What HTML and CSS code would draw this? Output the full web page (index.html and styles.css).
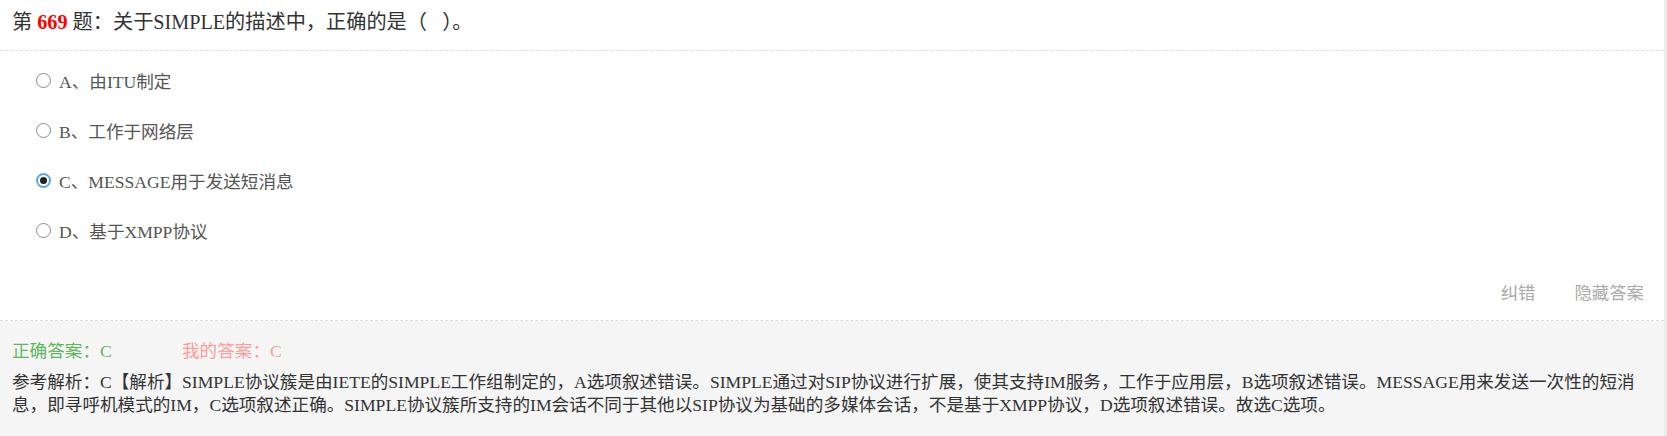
FILE: index.html
```html
<!DOCTYPE html>
<html lang="zh-CN">
<head>
<meta charset="utf-8">
<title>第669题</title>
<link rel="stylesheet" href="styles.css">
</head>
<body>
<div class="page">
  <div class="question">
    <div class="title">第 <b class="num">669</b> 题：关于SIMPLE的描述中，正确的是（&nbsp;&nbsp;&nbsp;）。</div>
    <ul class="options">
      <li class="option"><input type="radio" name="q669" class="radio"><span class="label">A、由ITU制定</span></li>
      <li class="option"><input type="radio" name="q669" class="radio"><span class="label">B、工作于网络层</span></li>
      <li class="option"><input type="radio" name="q669" class="radio" checked><span class="label">C、MESSAGE用于发送短消息</span></li>
      <li class="option"><input type="radio" name="q669" class="radio"><span class="label">D、基于XMPP协议</span></li>
    </ul>
    <div class="actions">
      <a class="action">纠错</a>
      <a class="action">隐藏答案</a>
    </div>
  </div>
  <div class="answer">
    <div class="answer-row">
      <span class="correct">正确答案：C</span>
      <span class="mine">我的答案：C</span>
    </div>
    <div class="analysis">参考解析：C【解析】SIMPLE协议簇是由IETE的SIMPLE工作组制定的，A选项叙述错误。SIMPLE通过对SIP协议进行扩展，使其支持IM服务，工作于应用层，B选项叙述错误。MESSAGE用来发送一次性的短消息，即寻呼机模式的IM，C选项叙述正确。SIMPLE协议簇所支持的IM会话不同于其他以SIP协议为基础的多媒体会话，不是基于XMPP协议，D选项叙述错误。故选C选项。</div>
  </div>
</div>
</body>
</html>
```

FILE: styles.css
```css
html, body {
  margin: 0;
  padding: 0;
}

body {
  background: #ececec;
  font-family: "Liberation Serif", "Noto Sans CJK SC", serif;
  color: #333;
}

.page {
  margin-right: 3px;
  background: #fff;
  min-height: 436px;
  display: flex;
  flex-direction: column;
}

.question {
  background: #fff;
}

.title {
  font-size: 20.2px;
  line-height: 28px;
  padding: 8px 12px 14px;
  border-bottom: 1px dashed #ddd;
  color: #333;
}

.num {
  color: #f00;
  font-weight: bold;
}

.options {
  list-style: none;
  margin: 0;
  padding: 4px 0 0 36px;
}

.option {
  display: flex;
  align-items: center;
  height: 50px;
  font-size: 17.6px;
  color: #555;
}

.radio {
  appearance: none;
  -webkit-appearance: none;
  width: 15px;
  height: 15px;
  margin: 0 8px 0 0;
  border: 1px solid #8a8a8a;
  border-radius: 50%;
  background: #fff;
  box-sizing: border-box;
  display: flex;
  align-items: center;
  justify-content: center;
}

.radio:checked {
  border: 2px solid #5aa9e6;
}

.radio:checked::after {
  content: "";
  width: 7px;
  height: 7px;
  border-radius: 50%;
  background: #222;
}

.actions {
  display: flex;
  justify-content: flex-end;
  gap: 39px;
  padding: 25px 20px 16px;
  border-bottom: 1px dashed #ddd;
}

.action {
  font-family: "Noto Sans CJK SC", sans-serif;
  font-size: 17.4px;
  line-height: 24px;
  color: #aaa;
  cursor: pointer;
}

.answer {
  flex: 1;
  background: #f5f5f5;
  padding: 20px 12px 12px;
}

.answer-row {
  display: flex;
  font-size: 17.6px;
  line-height: 20px;
}

.correct {
  color: #5cb85c;
  width: 170px;
}

.mine {
  color: #ff9b9b;
}

.analysis {
  margin-top: 10px;
  font-size: 17.6px;
  line-height: 23px;
  color: #333;
  padding-right: 14px;
}
```
